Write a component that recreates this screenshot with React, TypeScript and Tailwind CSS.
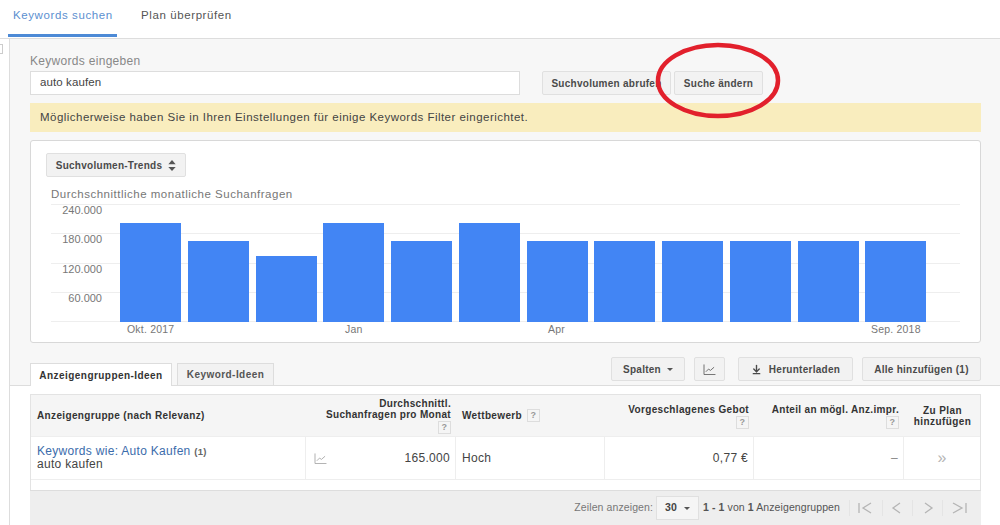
import { ArrowDownToLine } from "lucide-react";

const barHeights = [99, 81, 66, 99, 81, 99, 81, 81, 81, 81, 81, 81];
const axis = ["240.000", "180.000", "120.000", "60.000"];

function ChartIcon({ className }: { className?: string }) {
  return (
    <svg viewBox="0 0 14 12" fill="none" stroke="currentColor" strokeWidth="1" className={className}>
      <path d="M1 0.5V11.5H13.5" />
      <path d="M3 8.5L6 5.5L8 7L12 3.5" />
    </svg>
  );
}

function Help() {
  return (
    <span className="inline-flex h-[13px] w-[13px] items-center justify-center border border-[#ddd] bg-[#f5f5f5] text-[9px] font-bold leading-none text-[#999]">
      ?
    </span>
  );
}

function GreyButton({ className, children }: { className?: string; children: React.ReactNode }) {
  return (
    <div
      className={`flex h-[24px] items-center justify-center rounded-[2px] border border-[#e0e0e0] bg-[#f2f2f2] text-[10px] font-bold tracking-[0.27px] text-[#4a4a4a] ${className ?? ""}`}
    >
      {children}
    </div>
  );
}

function HeaderCell({ className, children }: { className?: string; children: React.ReactNode }) {
  return (
    <div
      className={`flex flex-col items-end justify-center pr-[4px] text-right text-[10px] font-bold leading-[11px] tracking-[0.33px] text-[#333] ${className ?? ""}`}
    >
      {children}
    </div>
  );
}

function Chart() {
  return (
    <div className="relative mx-[20px] mt-[2px] h-[118px]">
      <div className="absolute inset-0 flex flex-col justify-between">
        {[0, 1, 2, 3, 4].map((i) => (
          <div key={i} className="h-px bg-[#eee]" />
        ))}
      </div>
      <div className="absolute left-0 top-[-1px] flex w-[51px] flex-col items-end gap-[15.3px] text-[11px] leading-[14px] text-[#777]">
        {axis.map((a) => (
          <span key={a}>{a}</span>
        ))}
      </div>
      <div className="absolute inset-y-0 left-[69px] flex items-end gap-[6.75px]">
        {barHeights.map((h, i) => (
          <div key={i} className="w-[61px] bg-[#4285f4]" style={{ height: h }} />
        ))}
      </div>
    </div>
  );
}

export default function App() {
  return (
    <div className="relative h-[525px] w-[1000px] overflow-hidden bg-white font-['Liberation_Sans',Arial,sans-serif]">
      <div className="flex h-[39px] border-b border-[#ddd] pl-[8px] text-[11.5px] tracking-[0.6px]">
        <div className="h-[37px] w-[109px] border-b-[3px] border-[#4d8ad6] pl-[5px] pt-[7px] text-[#5b8fd0]">Keywords suchen</div>
        <div className="pl-[24px] pt-[7px] text-[#555]">Plan überprüfen</div>
      </div>

      <div className="flex h-[486px]">
        <div className="relative w-[10px] shrink-0 border-r border-[#ddd]">
          <div className="absolute left-[-6px] top-[5px] h-[10px] w-[9px] border border-[#ccc]" />
        </div>

        <div className="flex min-w-0 flex-1 flex-col">
          <div className="h-[347px] border-b border-[#ddd] bg-[#f7f7f7] pl-[20px] pr-[19px] pt-[14px]">
            <div className="h-[18px] text-[12px] leading-[16px] tracking-[0.3px] text-[#888]">Keywords eingeben</div>

            <div className="flex h-[24px]">
              <div className="flex w-[490px] items-center border border-[#ddd] bg-white pl-[9px] text-[11.5px] tracking-[0.1px] text-[#444]">
                auto kaufen
              </div>
              <GreyButton className="ml-[22px] w-[129px]">Suchvolumen abrufen</GreyButton>
              <GreyButton className="ml-[3px] w-[89px]">Suche ändern</GreyButton>
            </div>

            <div className="mt-[8px] flex h-[29px] items-center bg-[#f9edbe] pl-[10px] text-[11.5px] tracking-[0.47px] text-[#444]">
              Möglicherweise haben Sie in Ihren Einstellungen für einige Keywords Filter eingerichtet.
            </div>

            <div className="mt-[8px] h-[203px] rounded-[3px] border border-[#d8d8d8] bg-white">
              <GreyButton className="ml-[15px] mt-[12px] w-[140px] gap-[6px]">
                Suchvolumen-Trends
                <svg viewBox="0 0 8 12" className="h-[11px] w-[8px] fill-[#555]">
                  <path d="M4 0L8 4.5H0Z" />
                  <path d="M4 12L0 7.5H8Z" />
                </svg>
              </GreyButton>
              <div className="ml-[20px] mt-[10px] h-[15px] text-[11.5px] leading-[15px] tracking-[0.5px] text-[#777]">
                Durchschnittliche monatliche Suchanfragen
              </div>
              <Chart />
              <div className="relative h-[16px] text-[10.5px] leading-[14px] tracking-[0.2px] text-[#777]">
                <span className="absolute left-[96px]">Okt. 2017</span>
                <span className="absolute left-[314px]">Jan</span>
                <span className="absolute left-[517px]">Apr</span>
                <span className="absolute left-[840px]">Sep. 2018</span>
              </div>
            </div>

            <div className="mt-[14px] flex h-[28px]">
              <div className="mt-[6px] flex h-[23px] w-[142px] items-center justify-center border border-b-0 border-[#ddd] bg-white text-[10px] font-bold tracking-[0.45px] text-[#333]">
                Anzeigengruppen-Ideen
              </div>
              <div className="ml-[5px] mt-[6px] flex h-[22px] w-[97px] items-center justify-center border border-b-0 border-[#ddd] bg-[#f2f2f2] text-[10px] font-bold tracking-[0.45px] text-[#555]">
                Keyword-Ideen
              </div>
              <div className="flex-1" />
              <GreyButton className="w-[74px] gap-[6px]">
                Spalten
                <span className="mt-[1px] h-0 w-0 border-x-[3px] border-t-[3px] border-x-transparent border-t-[#555]" />
              </GreyButton>
              <GreyButton className="ml-[9px] w-[31px] text-[#666]">
                <ChartIcon className="h-[11px] w-[13px]" />
              </GreyButton>
              <GreyButton className="ml-[13px] w-[115px] gap-[7px]">
                <ArrowDownToLine className="h-[11px] w-[11px]" strokeWidth={3} />
                Herunterladen
              </GreyButton>
              <GreyButton className="ml-[9px] w-[119px]">Alle hinzufügen (1)</GreyButton>
            </div>
          </div>

          <div className="ml-[20px] mr-[19px] mt-[8px] border border-b-0 border-[#e3e3e3]">
            <div className="grid h-[42px] grid-cols-[274px_150px_149px_149px_150px_1fr] border-b border-[#eee] bg-[#f5f5f5]">
              <div className="flex items-center pl-[6px] text-[10px] font-bold tracking-[0.35px] text-[#333]">
                Anzeigengruppe (nach Relevanz)
              </div>
              <HeaderCell>
                <span>Durchschnittl.</span>
                <span>Suchanfragen pro Monat</span>
                <span className="mt-[1px] flex"><Help /></span>
              </HeaderCell>
              <div className="flex items-center gap-[5px] pl-[7px] text-[10px] font-bold tracking-[0.35px] text-[#333]">
                Wettbewerb <Help />
              </div>
              <HeaderCell className="justify-start pt-[9px]">
                <span>Vorgeschlagenes Gebot</span>
                <span className="mt-[1px] flex"><Help /></span>
              </HeaderCell>
              <HeaderCell className="justify-start pt-[9px]">
                <span className="whitespace-nowrap">Anteil an mögl. Anz.impr.</span>
                <span className="mt-[1px] flex"><Help /></span>
              </HeaderCell>
              <div className="flex flex-col items-center justify-center pl-[2px] text-[10px] font-bold leading-[11px] tracking-[0.4px] text-[#333]">
                <span>Zu Plan</span>
                <span>hinzufügen</span>
              </div>
            </div>

            <div className="grid h-[43px] grid-cols-[274px_150px_149px_149px_150px_1fr] border-b border-[#eee] text-[12px] tracking-[0.3px] text-[#444]">
              <div className="flex flex-col justify-center pl-[6px] leading-[13px]">
                <span>
                  <span className="text-[#3b6cab]">Keywords wie: Auto Kaufen</span>{" "}
                  <span className="text-[9.5px] font-bold text-[#666]">(1)</span>
                </span>
                <span>auto kaufen</span>
              </div>
              <div className="flex items-center justify-between border-l border-[#eee] pl-[8px] pr-[5px]">
                <ChartIcon className="h-[11px] w-[13px] text-[#aaa]" />
                <span>165.000</span>
              </div>
              <div className="flex items-center border-l border-[#eee] pl-[6px]">Hoch</div>
              <div className="flex items-center justify-end border-l border-[#eee] pr-[5px]">0,77 €</div>
              <div className="flex items-center justify-end border-l border-[#eee] pr-[5px] text-[#888]">–</div>
              <div className="flex items-center justify-center border-l border-[#eee] text-[16px] leading-none text-[#b5b5b5]">»</div>
            </div>
            <div className="h-[10px]" />
          </div>

          <div className="ml-[20px] mr-[19px] flex h-[35px] items-center justify-end border-t border-[#ddd] bg-[#eeeeee] pr-[10px] text-[10.5px] tracking-[0.1px] text-[#777]">
            <span>Zeilen anzeigen:</span>
            <div className="ml-[3px] flex h-[24px] w-[43px] items-center justify-center gap-[7px] border border-[#e0e0e0] bg-[#f5f5f5] font-bold text-[#444]">
              30
              <span className="h-0 w-0 border-x-[3px] border-t-[3px] border-x-transparent border-t-[#555]" />
            </div>
            <span className="ml-[4px] text-[#555]">
              <b>1 - 1</b> von <b>1</b> Anzeigengruppen
            </span>
            <svg viewBox="0 0 122 16" fill="none" stroke="#b5b5b5" strokeWidth="1.3" className="ml-[9px] h-[16px] w-[122px]">
              <path d="M10 3V13M22 3L14 8L22 13" />
              <path d="M51 3L44 8L51 13" />
              <path d="M76 3L83 8L76 13" />
              <path d="M104 3L113 8L104 13M117 3V13" />
              <path d="M0.5 0V16M33.5 0V16M63.5 0V16M93.5 0V16" stroke="#e4e4e4" strokeWidth="1" />
            </svg>
          </div>
        </div>
      </div>

      <svg viewBox="0 0 130 84" fill="none" className="absolute left-[655px] top-[40px] h-[84px] w-[130px]">
        <ellipse cx="63" cy="40.5" rx="60" ry="35.5" stroke="#e2202c" strokeWidth="4.5" />
      </svg>
    </div>
  );
}
